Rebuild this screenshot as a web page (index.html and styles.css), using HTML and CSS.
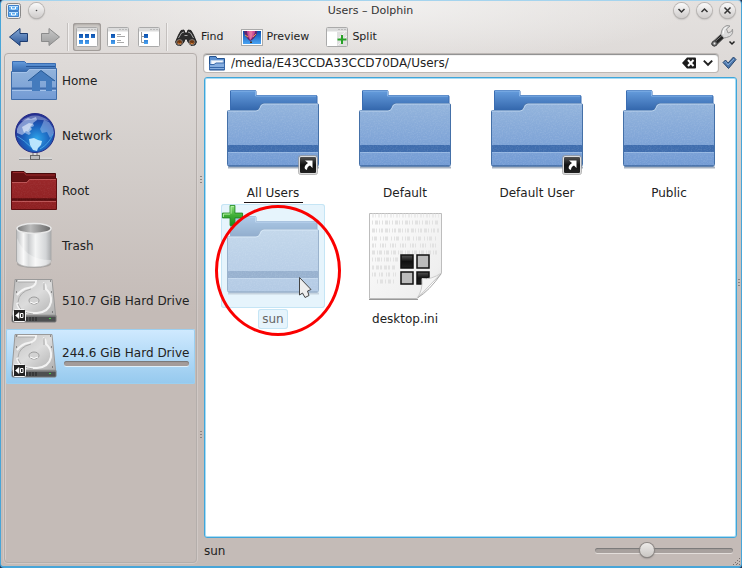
FILE: index.html
```html
<!DOCTYPE html>
<html lang="en">
<head>
<meta charset="utf-8">
<title>Users – Dolphin</title>
<link rel="stylesheet" href="styles.css">
</head>
<body>
<svg class="defs" aria-hidden="true">
  <defs>
    <linearGradient id="gBack" x2="0" y2="1"><stop stop-color="#669ddd"/><stop offset="1" stop-color="#2f62a8"/></linearGradient>
    <linearGradient id="gFront" x2="0" y2="1"><stop stop-color="#93b4dc"/><stop offset="1" stop-color="#739bd4"/></linearGradient>
    <linearGradient id="gDark" x2="0" y2="1"><stop stop-color="#555"/><stop offset=".5" stop-color="#111"/><stop offset="1" stop-color="#222"/></linearGradient>
    <linearGradient id="gRed" x2="0" y2="1"><stop stop-color="#9a282a"/><stop offset="1" stop-color="#8e2022"/></linearGradient>
    <radialGradient id="gGlobe" cx=".55" cy=".65" r=".65"><stop stop-color="#2fa5ea"/><stop offset=".5" stop-color="#1b62bd"/><stop offset="1" stop-color="#252b8e"/></radialGradient>
    <linearGradient id="gCan"><stop stop-color="#b9bbbd"/><stop offset=".2" stop-color="#f7f7f7"/><stop offset=".35" stop-color="#c9cbcd"/><stop offset=".55" stop-color="#f4f5f5"/><stop offset=".85" stop-color="#d3d5d7"/><stop offset="1" stop-color="#a9abad"/></linearGradient>
    <linearGradient id="gCanIn"><stop stop-color="#777"/><stop offset=".4" stop-color="#bbb"/><stop offset="1" stop-color="#666"/></linearGradient>
    <linearGradient id="gDisk" x2="1" y2="1"><stop stop-color="#bfbfbf"/><stop offset=".5" stop-color="#dcdcdc"/><stop offset="1" stop-color="#b0b0b0"/></linearGradient>
    <linearGradient id="gGreen" x2="0" y2="1"><stop stop-color="#8fe37c"/><stop offset=".5" stop-color="#3fae36"/><stop offset="1" stop-color="#1b8a1f"/></linearGradient>
    <linearGradient id="gPage" x2="1" y2="1"><stop stop-color="#fdfdfd"/><stop offset=".8" stop-color="#efefef"/><stop offset="1" stop-color="#ddd"/></linearGradient>
    <linearGradient id="gBlue" x2="0" y2="1"><stop stop-color="#86a9d6"/><stop offset="1" stop-color="#2b5596"/></linearGradient>
    <linearGradient id="gGrey" x2="0" y2="1"><stop stop-color="#c6c6c6"/><stop offset="1" stop-color="#9c9c9c"/></linearGradient>
    <linearGradient id="gCell" x2="0" y2="1"><stop stop-color="#0b4fae"/><stop offset="1" stop-color="#4aa3f2"/></linearGradient>
    <filter id="grain" x="0" y="0" width="1" height="1"><feTurbulence type="fractalNoise" baseFrequency=".7" numOctaves="2"/><feColorMatrix values="0 0 0 0 1  0 0 0 0 1  0 0 0 0 1  1.2 0 0 0 -.5"/><feComposite in2="SourceGraphic" operator="in"/></filter>
  </defs>
  <symbol id="folder" viewBox="0 0 104 104">
    <path d="M7 89.500H98" stroke="#6f8299" stroke-width="2" opacity=".6"/>
    <path d="M9.500 34V13q0-.5.5-.5H34q1 0 1 1V17.500H95q1 0 1 1V34z" fill="url(#gBack)" stroke="#3a6db2"/>
    <path d="M10 13H34.500V18H95" fill="none" stroke="#86b4e8"/>
    <path d="M6.500 33.500q0-1 1-1H35q2 0 3-2l1-3q1-2 3-2H96q1.500 0 1.500 1.500V86.500q0 1.500-1.500 1.500H8q-1.500 0-1.500-1.500z" fill="url(#gFront)" stroke="#4470a8"/>
    <path d="M7 33H35q3 0 4-3l1-2q1-2 3-2H97" fill="none" stroke="#b9d2ee"/>
    <path d="M7 67H97V74H7z" fill="#3f6dae"/>
    <path d="M7 74.500H97" stroke="#94b6e2"/>
    <path d="M7 33H35q3 0 4-3l1-2q1-2 3-2H97V88H7z" fill="#fff" filter="url(#grain)" opacity=".2"/>
    <path d="M7.500 88H96.500" stroke="#3d659c"/>
  </symbol>
  <symbol id="folder-home" viewBox="0 0 48 48">
    <path d="M2.500 16V4.500H14.500L16.500 6.500H45.500V16z" fill="url(#gBack)" stroke="#3a6db2"/>
    <path d="M16 9.500H45" stroke="#29589a"/>
    <path d="M1.500 14.500H16.500L19 11.500H46.500V42.500H1.500z" fill="url(#gFront)" stroke="#3e6ca9"/>
    <path d="M2 31.500H46" stroke="#3f6dae" stroke-width="2"/><path d="M2 33.500H46M2 15.500H17L19.500 12.500H46" fill="none" stroke="#a5c3ea"/>
    <path d="M31 13.500 18 24h4v10h8V24h6v10h6V24h3z" fill="#447bbd"/><path d="M18 24 31 13.500 45 24" fill="none" stroke="#265995"/>
  </symbol>
  <symbol id="folder-red" viewBox="0 0 48 48">
    <path d="M1.500 16V4.500H14L16 6.500H45.500V16z" fill="#651113" stroke="#4a090b"/><path d="M3 5.500H14L16 8H45" fill="none" stroke="#9a2b2d"/>
    <path d="M1.500 14.500H16.500L19 11.500H46.500V42.500H1.500z" fill="url(#gRed)" stroke="#5e0e10"/>
    <path d="M2 15.500H17L19.500 12.500H46M2 34.500H46" fill="none" stroke="#bd5556"/><path d="M2 32.500H46" stroke="#560c0e" stroke-width="2.500"/>
    <path d="M2 15H17L19.500 12H46V42H2z" fill="#fff" filter="url(#grain)" opacity=".1"/>
  </symbol>
  <symbol id="globe" viewBox="0 0 48 48">
    <path d="M9 46.500H42" stroke="#d8d8d8" stroke-width="2"/><path d="M9 47.500H42" stroke="#999"/>
    <path d="M23 40h4v4h-4z" fill="#ddd" stroke="#777"/><rect x="20.500" y="43.500" width="9" height="4" fill="#bbb" stroke="#666"/>
    <circle cx="25" cy="21" r="19.500" fill="url(#gGlobe)" stroke="#262c86"/>
    <path d="M7 17q2-5 6-8l5-3 3 1 5-2 1 3-4 3 1 3-4 2-2 3 3 2-2 2-4-2-3 2-5-2z" fill="#c5d3f1" opacity=".6"/>
    <path d="M12 15l7-4 4 1-3 3 2 2-3 3-3-1-2 2z" fill="#f1f6fd" opacity=".6"/>
    <path d="M19 27l5-1 4 2 4 1-1 4-3 3-1 3-4-1-3-5z" fill="#c3eaff" opacity=".95"/>
    <path d="M34 8l5 2 4 6 1 5-4 5-3-6-5 1-2-4 2-4z" fill="#9fc0ee" opacity=".5"/>
    <path d="M7 24q7 4 15 12M43 22q-4 10-13 15" fill="none" stroke="#62c8f8" opacity=".6"/>
    <path d="M11 9q14-11 28 0-14-3-28 0z" fill="#fff" opacity=".3"/>
  </symbol>
  <symbol id="trash" viewBox="0 0 48 48">
    <ellipse cx="24" cy="42" rx="17" ry="4" fill="#777" opacity=".4"/>
    <path d="M6.500 7V39q2 6 17.500 6t17-6V7z" fill="url(#gCan)" stroke="#aaa"/>
    <path d="M7 16q8 22 34 22v2q-3 5-17 5T7 40z" fill="#fff" opacity=".35"/>
    <ellipse cx="24" cy="6.500" rx="17" ry="5" fill="url(#gCanIn)" stroke="#e8e8e8" stroke-width="1.500"/>
  </symbol>
  <symbol id="disk" viewBox="0 0 48 48">
    <path d="M5 2.500H42L45.500 38H2z" fill="url(#gDisk)" stroke="#9a9a9a"/>
    <path d="M2 38.500H46V44q0 1-1 1H3q-1 0-1-1z" fill="#4d4f50" stroke="#777"/><path d="M2 39H46" stroke="#999"/>
    <path d="M17 40v4M20 40v4M23 40v4M26 40v4" stroke="#222"/><path d="M39 41h2v1h-2z" fill="#4c4"/>
    <path d="M8 4H26q0 6-8 7-6 1-11 7M33 6q3 1 3 6 6 5 5 13-2 10-14 11Q9 37 7 26" fill="none" stroke="#f3f3f3" stroke-width="2"/>
    <path d="M8 5H25M8 25q1-10 13-13M34 6v7M8 27q3 9 15 10" fill="none" stroke="#aaa"/>
    <ellipse cx="24" cy="23.500" rx="5" ry="3.500" fill="#d2d2d2" stroke="#9c9c9c"/><path d="M20 25q4 3 8 0" stroke="#fff" fill="none"/>
    <path d="M6 15h1M40 4h1M41 15h1M42 35h1M6 4h1" stroke="#444"/>
    <rect x="3.500" y="32.500" width="12" height="12" rx="1" fill="#222" stroke="#f4f4f4"/>
    <path d="M5.500 38.500l3.500-3v6z" fill="#fff" stroke="#fff" stroke-width=".6"/><path d="M10.500 36.500h2.500v4h-2.500z" fill="none" stroke="#fff"/>
  </symbol>
  <symbol id="link" viewBox="0 0 20 20">
    <rect x="1.500" y="1.500" width="17" height="17" rx="1.500" fill="url(#gDark)" stroke="#ddd"/>
    <rect x=".5" y=".5" width="19" height="19" rx="2" fill="none" stroke="#999" opacity=".7"/>
    <path d="M7 5.500h7.500V13L12 10.500q-3 1-3 4.500l-2-1q-1.500-3 3-6z" fill="#fff"/>
  </symbol>
  <symbol id="page" viewBox="0 0 104 104">
    <path d="M16.500 9.500H88.500V69L64 94.500H16.500z" fill="url(#gPage)" stroke="#bdbdbd"/>
    <path d="M16 95.500H65" stroke="#999"/>
    <g fill="none" stroke="#e2e2e2" stroke-width="4"><path d="M19 11.500H86" stroke-dasharray="2 1 1 2" opacity=".6"/><path d="M19 18.500H86" stroke-dasharray="1 2 3 1 1 2"/><path d="M19 26.500H86" stroke-dasharray="3 1 1 2 1 1 2 2"/><path d="M19 34.500H84" stroke-dasharray="1 1 3 3 1 2"/><path d="M19 41.500H84" stroke-dasharray="2 1 1 4 1 1"/><path d="M19 48.500H84" stroke-dasharray="3 2 1 1"/><path d="M19 55.500H45" stroke-dasharray="1 2 1 1 3 1"/><path d="M19 63.500H43" stroke-dasharray="2 2 3 1"/><path d="M19 70.500H43" stroke-dasharray="1 1 2 3"/><path d="M24 77.500H41" stroke-dasharray="1 2 3 2"/></g>
    <g stroke="#111" stroke-width="1.500"><path d="M48 51h12v13H48z" fill="url(#gDark)"/><path d="M64 51h12v13H64zM48 68h12v12H48z" fill="#bcbcbc"/><path d="M64 68h12v7l-7 5h-5z" fill="url(#gDark)"/></g>
    <path d="M64 94.500Q70 86 69 74.500 78 76 88.500 69z" fill="#f5f5f5" stroke="#ccc"/><path d="M65 93.500Q76 87 88 70" stroke="#aaa" fill="none"/>
  </symbol>
  <symbol id="plus" viewBox="0 0 24 24"><path d="M9.500 1.500h5v8h8v5h-8v8h-5v-8h-8v-5h8z" fill="url(#gGreen)" stroke="#238c24"/><path d="M10.500 10V2.500h3M2.500 13.500v-3h7" stroke="#b8f3a9" fill="none"/></symbol>
  <symbol id="arrow" viewBox="0 0 22 22"><path d="M1.500 11 12 2.500V7.500h7.500v8H12V19.500z" stroke-linejoin="round"/></symbol>
  <symbol id="frame" viewBox="0 0 22 22"><rect x=".5" y="1.500" width="21" height="19" rx="1" fill="#fff" stroke="#aaa"/><path d="M1 2h20v3.500H1z" fill="#dcdcdc"/><path d="M12 3.500h2M15 3.500h2M18 3.500h2" stroke="#bbb"/></symbol>
  <symbol id="down" viewBox="0 0 10 10"><path d="M1.500 3 5 6.500 8.500 3" fill="none" stroke="#222" stroke-width="1.600"/></symbol>
</svg>

<div class="window">
  <header class="titlebar">
    <div class="title-left">
      <button class="plain" aria-label="Application menu"><svg width="15" height="16" viewBox="0 0 15 16"><rect x=".5" y=".5" width="14" height="15" rx="2" fill="#eee" stroke="#888"/><path d="M2.500 2.500h10v5h-10zM2.500 8.500h10v5h-10z" fill="#5fadf0" stroke="#3f7fc8"/><path d="M3 3.500h9M3 9.500h9" stroke="#b9e0ff"/><path d="M5.500 4v2h4v-2M5.500 10v2h4v-2" stroke="#fff" fill="none"/></svg></button>
      <button class="round" aria-label="All desktops"><svg width="15" height="15" viewBox="0 0 15 15"><circle class="dot" cx="7.500" cy="7.500" r=".8"/></svg></button>
    </div>
    <h1>Users – Dolphin</h1>
    <div class="title-right">
      <button class="round" aria-label="Minimize"><svg width="15" height="15" viewBox="0 0 15 15"><path d="M4.500 6l3 3 3-3"/></svg></button>
      <button class="round" aria-label="Maximize"><svg width="15" height="15" viewBox="0 0 15 15"><path d="M4.500 9l3-3 3 3"/></svg></button>
      <button class="round" aria-label="Close"><svg width="15" height="15" viewBox="0 0 15 15"><path d="M4.500 4.500l6 6M10.500 4.500l-6 6"/></svg></button>
    </div>
  </header>

  <nav class="toolbar" aria-label="Main toolbar">
    <button class="tool arrow" aria-label="Back"><svg width="22" height="22" fill="url(#gBlue)" stroke="#1d3c70"><use href="#arrow"/></svg></button>
    <button class="tool arrow" aria-label="Forward"><svg class="flip" width="22" height="22" fill="url(#gGrey)" stroke="#8b8b8b"><use href="#arrow"/></svg></button>
    <span class="sep"></span>
    <button class="tool view on" aria-label="Icons"><svg width="22" height="22" viewBox="0 0 22 22"><use href="#frame"/><path d="M3 8h4v4H3zM9 8h4v4H9zM15 8h4v4h-4zM3 14h4v4H3zM9 14h4v4H9z" fill="url(#gCell)"/></svg></button>
    <button class="tool view" aria-label="Details"><svg width="22" height="22" viewBox="0 0 22 22"><use href="#frame"/><path d="M4 8h4v4H4zM4 14h4v4H4z" fill="url(#gCell)"/><path d="M10 8.500h4M10 10.500h8M10 14.500h4M10 16.500h7" stroke="#aaa"/></svg></button>
    <button class="tool view" aria-label="Tree"><svg width="22" height="22" viewBox="0 0 22 22"><use href="#frame"/><path d="M3.500 6v10.500H6M3.500 10.500H6" stroke="#999" fill="none"/><path d="M6 8h4v4H6zM6 14h4v4H6z" fill="url(#gCell)"/></svg></button>
    <span class="sep"></span>
    <button class="tool find"><svg width="22" height="22" viewBox="0 0 22 22"><path d="M.5 16 3.500 9 6 4.500l3-.5 1 3h2l1-3 3 .5L18.500 9l3 7-1.500 3-4 .5-3-3.500-1-3h-2l-1 3-3 3.500L2 19z" fill="#2c2c2c" stroke="#111" stroke-width=".8"/><path d="M3.500 12l3-5 2.500-1M18.500 12l-3-5-2.500-1M9.500 9.500h3" stroke="#a5a5a5" fill="none"/><ellipse cx="4.500" cy="16.200" rx="3" ry="2.600" fill="#6d3711" stroke="#8a8a8a" stroke-width=".8"/><ellipse cx="17" cy="16.200" rx="3" ry="2.600" fill="#6d3711" stroke="#8a8a8a" stroke-width=".8"/><path d="M3 17q2 1.500 3 0M15.500 17q2 1.500 3 0" fill="none" stroke="#e0863a"/></svg>Find</button>
    <button class="tool preview"><svg width="22" height="22" viewBox="0 0 22 22"><rect x=".5" y="3.500" width="21" height="16" fill="#fff" stroke="#aaa"/><path d="M2 5h18v13H2z" fill="url(#gCell)"/><path d="M3 5h13q1 4-5 9l-2 1Q3 10 3 5z" fill="#5d2670"/><path d="M6 5q0 5 3 9 5-4 5-9" fill="#cf4d96"/><path d="M8 5q0 5 1.500 9Q12 10 11.500 5" fill="#e2739f"/><path d="M4 9l3 2M12 11l3-3" stroke="#e5a048"/><path d="M9 15.500h2v1.500H9z" fill="#4c3020"/></svg>Preview</button>
    <button class="tool split"><svg width="22" height="22" viewBox="0 0 22 22"><use href="#frame"/><path d="M11 6h10v14H11z" fill="#e0e0e0"/><path d="M12 13l7-7M12 19l9-9" stroke="#f4f4f4"/><path d="M16 9v9M11.500 13.500h9" stroke="#27a127" stroke-width="2"/></svg>Split</button>
    <button class="tool wrench" aria-label="Configure"><svg width="26" height="26" viewBox="0 0 26 26"><path d="M2.500 18 11 10l4 3-8.500 8q-2 2-4 .5t0-3.500z" fill="#222" stroke="#777"/><path d="M4.500 18l8-7" stroke="#777"/><circle cx="4.500" cy="19.500" r="2.500" fill="#777" stroke="#444"/><circle cx="4.500" cy="19.500" r=".9" fill="#eee"/><path d="M11 10.500q.500-7.500 6-9l3 .5-3.500 3 1.500 4 3.500-1.500 1-2.500q1.500 7-6 8.500l-2.500.500z" fill="#dcdcdc" stroke="#999"/><path d="M13 10q0-5 3.500-7" stroke="#fff" fill="none"/><path d="M19.500 17.500l2.500 2.500 2.500-2.500" fill="none" stroke="#222" stroke-width="1.500"/></svg></button>
  </nav>

  <div class="body">
    <aside class="places">
      <a class="place" href="#"><svg><use href="#folder-home"/></svg><span>Home</span></a>
      <a class="place" href="#"><svg><use href="#globe"/></svg><span>Network</span></a>
      <a class="place" href="#"><svg><use href="#folder-red"/></svg><span>Root</span></a>
      <a class="place" href="#"><svg><use href="#trash"/></svg><span>Trash</span></a>
      <a class="place" href="#"><svg><use href="#disk"/></svg><span>510.7 GiB Hard Drive</span></a>
      <a class="place selected" href="#" aria-current="true"><svg><use href="#disk"/></svg><span>244.6 GiB Hard Drive<i class="capacity"></i></span></a>
    </aside>
    <div class="splitter"><i></i><i></i></div>
    <main class="content">
      <div class="location">
        <div class="combo">
          <svg width="16" height="16" viewBox="0 0 16 16"><path d="M.5 15V1.500H7l1 2h7.500V15z" fill="#5c91d2" stroke="#24528f"/><path d="M2 5.500h12v4H2z" fill="#f4f8fd" stroke="#bad0eb"/><path d="M.5 9.500H5l2-1.500h8.500v6.500H.5z" fill="#86aee0" stroke="#3a6aab"/><path d="M1 12.500h14" stroke="#3768aa"/></svg>
          <input type="text" aria-label="Location" value="/media/E43CCDA33CCD70DA/Users/">
          <button class="plain" aria-label="Clear"><svg width="14" height="12" viewBox="0 0 14 12"><path d="M0 6 5 .5h8q1 0 1 1v9q0 1-1 1H5z" fill="#1c1c1c"/><path d="M6 3l5.500 6M11.500 3 6 9" stroke="#fff" stroke-width="2"/></svg></button>
          <button class="plain history" aria-label="History"><svg width="12" height="12"><use href="#down"/></svg></button>
        </div>
        <button class="plain" aria-label="Go"><svg width="15" height="14" viewBox="0 0 15 14"><path d="M1 6.500 3.500 4 6 7 11.500 1 14 3.500 6.500 12.500z" fill="#4c78ad" stroke="#28476f" stroke-linejoin="round"/><path d="M2.500 6.500l1-1L6 9l6-6" stroke="#83a8d5" fill="none"/></svg></button>
      </div>
      <section class="files" aria-label="Files">
        <a class="file" href="#"><span class="tile"><svg><use href="#folder"/></svg><svg class="emblem"><use href="#link"/></svg></span><span class="name marked">All Users</span></a>
        <a class="file" href="#"><span class="tile"><svg><use href="#folder"/></svg></span><span class="name">Default</span></a>
        <a class="file" href="#"><span class="tile"><svg><use href="#folder"/></svg><svg class="emblem"><use href="#link"/></svg></span><span class="name">Default User</span></a>
        <a class="file" href="#"><span class="tile"><svg><use href="#folder"/></svg></span><span class="name">Public</span></a>
        <a class="file hover" href="#"><span class="tile"><svg><use href="#folder"/></svg><svg class="add"><use href="#plus"/></svg></span><span class="name">sun</span>
          <i class="ring"></i>
          <svg class="pointer" viewBox="0 0 16 24"><path d="M1.500 1.500 13 13.500 9.500 15 11 19.500 7 21.500 4.500 17 1.500 19z" fill="#eee" stroke="#444" stroke-linejoin="round"/></svg></a>
        <a class="file" href="#"><span class="tile"><svg><use href="#page"/></svg></span><span class="name">desktop.ini</span></a>
      </section>
      <footer class="status">
        <label for="zoom">sun</label>
        <input id="zoom" type="range" min="0" max="100" value="36">
      </footer>
    </main>
    <div class="splitter edge"><i></i></div>
  </div>
  <svg class="grip" width="8" height="8" viewBox="0 0 8 8"><path d="M6 0h1v1H6zM4 2h1v1H4zM6 3h1v1H6zM2 4h1v1H2zM4 5h1v1H4zM0 6h1v1H0zM6 6h1v1H6zM3 6h1v1H3z" fill="#77706d"/></svg>
</div>
</body>
</html>
```

FILE: styles.css
```css
* { box-sizing: border-box; }

body {
  margin: 0;
  background: #1f3556;
  color: #222;
  font: 12px/16px "DejaVu Sans", sans-serif;
}

button, input { font: inherit; color: inherit; margin: 0; }
a { color: inherit; text-decoration: none; }
svg { display: block; flex: none; }
.defs { position: absolute; width: 0; height: 0; }

.window {
  position: relative;
  display: flex;
  flex-direction: column;
  height: 100vh;
  border: 1px solid #48a5d8;
  border-top-color: #a5d4ee;
  border-bottom-width: 2px;
  border-radius: 4px;
  background:
    radial-gradient(ellipse 330px 64px at 50% 0, #f2f1f0, transparent),
    linear-gradient(#e4e1df, #dedad8 60px, #d4cfcc 150px, #c4bbb7 310px);
}

.titlebar {
  display: grid;
  grid-template-columns: 1fr auto 1fr;
  align-items: center;
  height: 19px;
  padding: 0 6px 0 5px;
}
.titlebar h1 { margin: 0; font-size: 11px; font-weight: normal; color: #333; }
.title-left, .title-right { display: flex; gap: 8px; align-items: center; }
.title-right { justify-content: flex-end; }

.plain { padding: 0; border: 0; background: none; }
.round {
  padding: 0;
  border: 0;
  border-radius: 50%;
  background: linear-gradient(#fafafa, #cfcccb);
  box-shadow: 0 0 0 1px #b9b6b4, 0 1px 2px #888;
}
.round path { fill: none; stroke: #333; stroke-width: 1.5; }
.dot { fill: #444; }

.toolbar {
  display: flex;
  align-items: center;
  height: 33px;
  padding: 0 5px 0 7px;
}
.tool {
  display: flex;
  align-items: center;
  gap: 4px;
  padding: 0;
  border: 0;
  background: none;
  font-size: 11px;
}
.tool.arrow { width: 31px; }
.flip { transform: scaleX(-1); }
.tool.view {
  width: 28px;
  height: 28px;
  margin-right: 3px;
  justify-content: center;
  border-radius: 3px;
}
.tool.on { background: #cfcbc8; box-shadow: inset 0 0 0 1px #a29d9a, inset 0 1px 3px #8f8a87; }
.sep { width: 2px; height: 28px; margin-right: 4px; border-left: 1px solid #c4c0be; border-right: 1px solid #f2f0ef; }
.arrow + .sep { margin-left: -3px; }
.find { margin-left: 3px; }
.find, .preview { margin-right: 17px; }
.tool.wrench { margin-left: auto; }

.body { flex: 1; display: flex; min-height: 0; padding: 0 0 3px 3px; }

.places {
  flex: 0 0 193px;
  padding: 0 1px;
  border: 1px solid #b4aeab;
  border-radius: 4px;
  box-shadow: inset 1px 1px 0 #e3dfdd80, 0 0 0 1px #ddd8d580;
}
.place {
  display: flex;
  align-items: center;
  gap: 4px;
  height: 55px;
  padding: 0 0 2px 4px;
  border-radius: 2px;
  white-space: nowrap;
}
.place svg { width: 48px; height: 48px; }
.place.selected {
  background: linear-gradient(#d0eaff, #95c9ee);
  box-shadow: inset 0 0 0 1px #9bcff0;
}
.capacity {
  display: block;
  height: 5px;
  margin-left: 2px;
  border-radius: 3px;
  background: #a49c9a;
  box-shadow: inset 0 1px 1px #777, 0 1px 0 #dff0fa;
}

.splitter {
  flex: 0 0 7px;
  display: flex;
  flex-direction: column;
  justify-content: space-around;
  align-items: center;
}
.splitter i { width: 2px; height: 9px; background: repeating-linear-gradient(#8c8683 0 1px, transparent 1px 3px); }
.splitter.edge { flex-basis: 4px; justify-content: flex-start; padding-top: 226px; }

.content { flex: 1; min-width: 0; display: flex; flex-direction: column; }
.location { display: flex; align-items: center; gap: 4px; padding-top: 1px; }
.combo {
  flex: 1;
  display: flex;
  align-items: center;
  gap: 6px;
  height: 18px;
  padding: 0 4px 0 5px;
  border-radius: 3px;
  background: #fff;
  box-shadow: inset 0 1px 1px #888, 0 0 0 1px #bdb8b5;
}
.combo input { flex: 1; min-width: 0; padding: 0; border: 0; background: none; outline: 0; }

.files {
  flex: 1;
  display: grid;
  grid-template-columns: repeat(auto-fill, 132px);
  grid-auto-rows: 126px;
  margin-top: 5px;
  padding-left: 2px;
  border: 1px solid #3fa5d9;
  border-radius: 3px;
  background: #fff;
  box-shadow: inset 0 0 0 1px #a6dcf5;
}
.file { position: relative; display: flex; flex-direction: column; align-items: center; gap: 1px; }
.tile { position: relative; width: 104px; height: 104px; border-radius: 3px; }
.tile svg { width: 100%; height: 100%; }
.tile .emblem { position: absolute; right: 7px; bottom: 7px; width: 20px; height: 20px; }
.tile .add { position: absolute; left: 0; top: 0; width: 23px; height: 23px; }
.name { position: relative; padding: 2px 4px; border-radius: 3px; }
.marked::after {
  content: "";
  position: absolute;
  inset: auto 0 0 1px;
  height: 1px;
  background: #1d1417;
}
.hover .tile { background: #e6f4fc; box-shadow: inset 0 0 0 1px #c5e5f5; }
.hover .tile svg:first-child { opacity: .5; filter: saturate(.75) brightness(1.05); }
.hover .name { background: #e6f4fc; box-shadow: inset 0 0 0 1px #c5e5f5; color: #666; }
.ring {
  position: absolute;
  left: 8px;
  top: 1px;
  width: 126px;
  height: 131px;
  border: 3px solid #fa0000;
  border-radius: 50%;
}
.pointer { position: absolute; left: 91px; top: 72px; width: 16px; height: 24px; }

.status {
  display: flex;
  align-items: center;
  justify-content: space-between;
  height: 25px;
  padding-right: 4px;
}
#zoom { appearance: none; width: 138px; height: 15px; background: none; }
#zoom::-webkit-slider-runnable-track {
  height: 5px;
  border-radius: 3px;
  background: #a8a19e;
  box-shadow: inset 0 1px 1px #777, 0 1px 0 #e3dedb;
}
#zoom::-webkit-slider-thumb {
  appearance: none;
  width: 14px;
  height: 14px;
  margin-top: -5px;
  border-radius: 50%;
  background: linear-gradient(#eceae8, #c9c6c3);
  box-shadow: 0 0 0 1px #8d8885, 0 1px 2px #555;
}
.grip { position: absolute; right: 0; bottom: 0; }
```
